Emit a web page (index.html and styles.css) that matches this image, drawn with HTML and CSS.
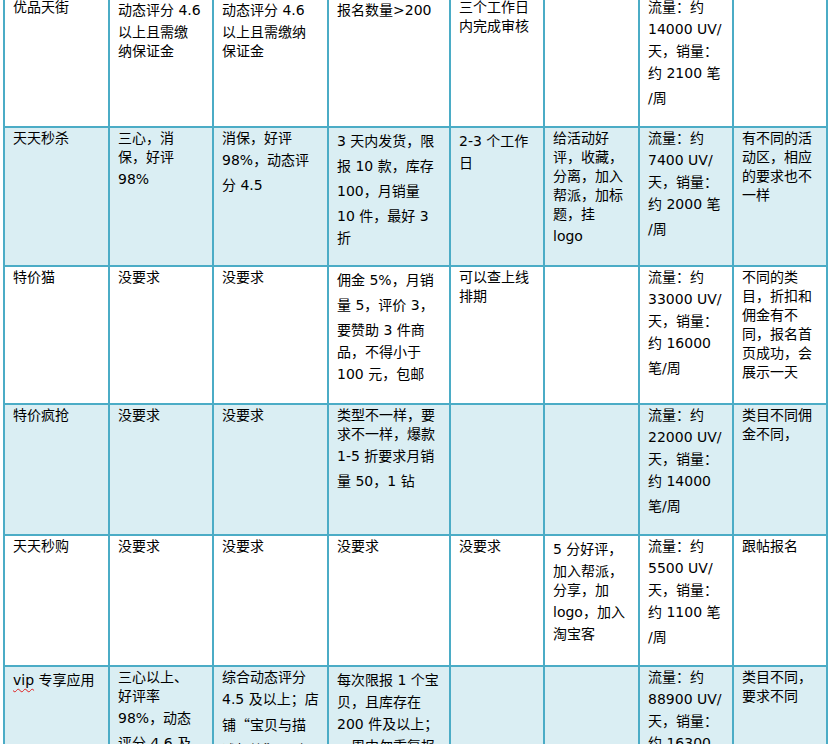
FILE: index.html
```html
<!DOCTYPE html>
<html lang="zh-CN">
<head>
<meta charset="utf-8">
<title>活动报名要求</title>
<link rel="stylesheet" href="styles.css">
</head>
<body>
<table class="sheet">
  <colgroup>
    <col class="c1"><col class="c2"><col class="c3"><col class="c4">
    <col class="c5"><col class="c6"><col class="c7"><col class="c8">
  </colgroup>
  <tbody>
    <tr class="r1">
      <td>优品天街</td>
      <td>动态评分<span class="n"> 4.6</span><br>以上且需缴<br>纳保证金</td>
      <td>动态评分<span class="n"> 4.6</span><br>以上且需缴纳<br>保证金</td>
      <td>报名数量<span class="n">&gt;200</span></td>
      <td>三个工作日<br>内完成审核</td>
      <td></td>
      <td>流量：约<br><span class="n">14000 UV/</span><br>天，销量：<br>约<span class="n"> 2100 </span>笔<br><span class="n">/</span>周</td>
      <td></td>
    </tr>
    <tr class="r2 alt">
      <td>天天秒杀</td>
      <td>三心，消<br>保，好评<br><span class="n">98%</span></td>
      <td>消保，好评<br><span class="n">98%</span>，动态评<br>分<span class="n"> 4.5</span></td>
      <td><span class="n">3 </span>天内发货，限<br>报<span class="n"> 10 </span>款，库存<br><span class="n">100</span>，月销量<br><span class="n">10 </span>件，最好<span class="n"> 3</span><br>折</td>
      <td><span class="n">2-3 </span>个工作<br>日</td>
      <td>给活动好<br>评，收藏，<br>分离，加入<br>帮派，加标<br>题，挂<br><span class="n">logo</span></td>
      <td>流量：约<br><span class="n">7400 UV/</span><br>天，销量：<br>约<span class="n"> 2000 </span>笔<br><span class="n">/</span>周</td>
      <td>有不同的活<br>动区，相应<br>的要求也不<br>一样</td>
    </tr>
    <tr class="r3">
      <td>特价猫</td>
      <td>没要求</td>
      <td>没要求</td>
      <td>佣金<span class="n"> 5%</span>，月销<br>量<span class="n"> 5</span>，评价<span class="n"> 3</span>，<br>要赞助<span class="n"> 3 </span>件商<br>品，不得小于<br><span class="n">100 </span>元，包邮</td>
      <td>可以查上线<br>排期</td>
      <td></td>
      <td>流量：约<br><span class="n">33000 UV/</span><br>天，销量：<br>约<span class="n"> 16000</span><br>笔<span class="n">/</span>周</td>
      <td>不同的类<br>目，折扣和<br>佣金有不<br>同，报名首<br>页成功，会<br>展示一天</td>
    </tr>
    <tr class="r4 alt">
      <td>特价疯抢</td>
      <td>没要求</td>
      <td>没要求</td>
      <td>类型不一样，要<br>求不一样，爆款<br><span class="n">1-5 </span>折要求月销<br>量<span class="n"> 50</span>，<span class="n">1 </span>钻</td>
      <td></td>
      <td></td>
      <td>流量：约<br><span class="n">22000 UV/</span><br>天，销量：<br>约<span class="n"> 14000</span><br>笔<span class="n">/</span>周</td>
      <td>类目不同佣<br>金不同，</td>
    </tr>
    <tr class="r5">
      <td>天天秒购</td>
      <td>没要求</td>
      <td>没要求</td>
      <td>没要求</td>
      <td>没要求</td>
      <td><span class="n">5 </span>分好评，<br>加入帮派，<br>分享，加<br><span class="n">logo</span>，加入<br>淘宝客</td>
      <td>流量：约<br><span class="n">5500 UV/</span><br>天，销量：<br>约<span class="n"> 1100 </span>笔<br><span class="n">/</span>周</td>
      <td>跟帖报名</td>
    </tr>
    <tr class="r6 alt">
      <td><span class="n"><span class="spell">vip</span> </span>专享应用</td>
      <td>三心以上、<br>好评率<br><span class="n">98%</span>，动态<br>评分<span class="n"> 4.6 </span>及<br>以上</td>
      <td>综合动态评分<br><span class="n">4.5 </span>及以上；店<br>铺<span class="q">“</span>宝贝与描<br>述相符<span class="q">”</span>项动<br>态评分</td>
      <td>每次限报<span class="n"> 1 </span>个宝<br>贝，且库存在<br><span class="n">200 </span>件及以上；<br>一周中勿重复报<br>名</td>
      <td></td>
      <td></td>
      <td>流量：约<br><span class="n">88900 UV/</span><br>天，销量：<br>约<span class="n"> 16300</span><br>笔<span class="n">/</span>周</td>
      <td>类目不同，<br>要求不同</td>
    </tr>
  </tbody>
</table>
</body>
</html>
```

FILE: styles.css
```css
html, body {
  margin: 0;
  padding: 0;
  background: #ffffff;
}

body {
  overflow: hidden;
}

.sheet {
  border-collapse: collapse;
  table-layout: fixed;
  width: 823px;
  margin: -5px 0 0 3px;
  font-family: "DejaVu Sans", "Noto Sans CJK SC", sans-serif;
  font-size: 14px;
  line-height: 19px;
  color: #000000;
}

.c1 { width: 105px; }
.c2 { width: 104px; }
.c3 { width: 115px; }
.c4 { width: 122px; }
.c5 { width: 94px; }
.c6 { width: 95px; }
.c7 { width: 94px; }
.c8 { width: 94px; }

.sheet td {
  border: 2px solid #4bacc6;
  padding: 1px 2px 0 8px;
  vertical-align: top;
  white-space: nowrap;
  overflow: hidden;
  background: #ffffff;
}

.sheet .alt td {
  background: #daeef3;
}

.r1 td { height: 128px; }
.r2 td { height: 136px; }
.r3 td { height: 135px; }
.r4 td { height: 128px; }
.r5 td { height: 128px; }
.r6 td { height: 160px; }

.n {
  line-height: 25px;
}

.q {
  font-family: "Noto Sans CJK SC", sans-serif;
  line-height: 25px;
}

.spell {
  text-decoration: underline wavy #e02020;
  text-decoration-thickness: 1px;
  text-underline-offset: 3px;
}
```
